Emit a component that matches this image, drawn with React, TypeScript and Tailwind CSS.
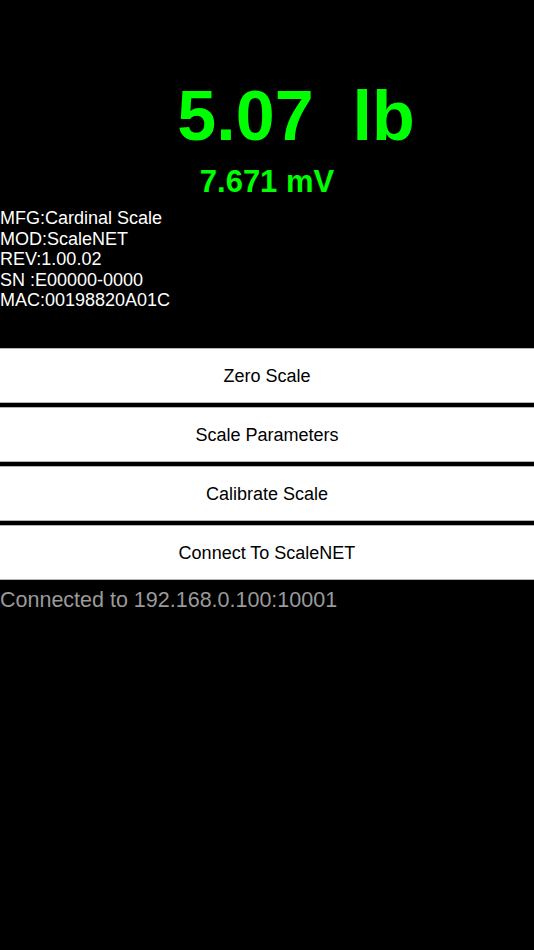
import React from 'react';

const info = [
    'MFG:Cardinal Scale',
    'MOD:ScaleNET',
    'REV:1.00.02',
    'SN :E00000-0000',
    'MAC:00198820A01C',
];

const actions = ['Zero Scale', 'Scale Parameters', 'Calibrate Scale', 'Connect To ScaleNET'];

const App = () => {
    return (
        <div
            className="min-h-[950px] w-full bg-black flex flex-col"
            style={{ fontFamily: '"Liberation Sans", Arial, sans-serif' }}
        >
            <div className="pt-[81px] pl-[58px] text-center text-[70px] leading-[70px] font-bold text-[#00ff00] whitespace-pre">
                {'5.07  lb'}
            </div>
            <div className="mt-[15px] text-center text-[31px] leading-[31px] font-bold text-[#00ff00]">
                7.671 mV
            </div>
            <div className="mt-[11px] flex flex-col text-[18px] leading-[20.5px] text-white whitespace-pre">
                {info.map((line) => (
                    <div key={line}>{line}</div>
                ))}
            </div>
            <div className="mt-[37px] flex flex-col gap-[4.3px]">
                {actions.map((label) => (
                    <button
                        key={label}
                        className="h-[55px] w-full bg-white border-y border-[#b4b4b4] pt-[2px] text-[18px] text-black"
                    >
                        {label}
                    </button>
                ))}
            </div>
            <div className="mt-[7px] text-[21.5px] leading-[26px] text-[#9a9a9a]">
                Connected to 192.168.0.100:10001
            </div>
        </div>
    );
};

export default App;
